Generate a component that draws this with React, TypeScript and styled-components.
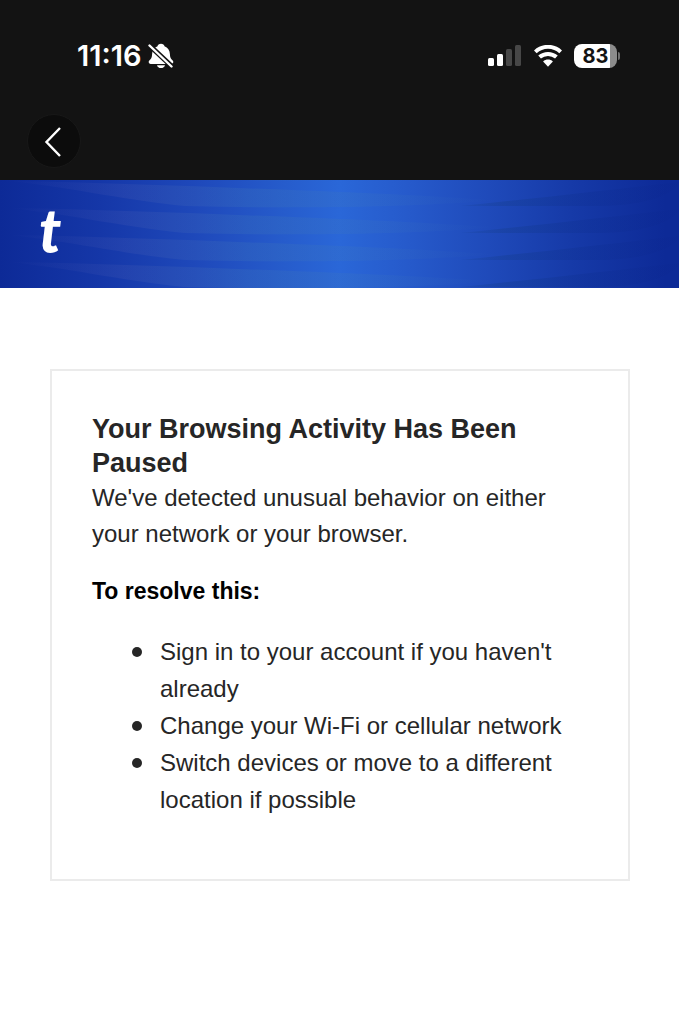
import React from 'react';
import styled, { createGlobalStyle } from 'styled-components';

const GlobalStyle = createGlobalStyle`
  *, *::before, *::after { box-sizing: border-box; }
  body {
    margin: 0;
    background: #ffffff;
    color: #262626;
    font-family: "Liberation Sans", Arial, Helvetica, sans-serif;
  }
`;

const TopArea = styled.div`
  background: #131313;
  padding-bottom: 12px;
`;

const StatusBar = styled.div`
  display: flex;
  align-items: center;
  justify-content: space-between;
  height: 112px;
  padding: 0 59px 0 77px;
`;

const StatusGroup = styled.div<{ $gap: number }>`
  display: flex;
  align-items: center;
  gap: ${({ $gap }) => $gap}px;
`;

const Clock = styled.time`
  color: #ffffff;
  font-family: Inter, sans-serif;
  font-size: 29px;
  font-weight: 600;
  line-height: 36px;
`;

const Battery = styled.div`
  display: flex;
  align-items: center;
  gap: 1px;
`;

const BatteryBody = styled.div`
  display: flex;
  align-items: center;
  justify-content: center;
  width: 43px;
  height: 24px;
  border-radius: 8px;
  background: linear-gradient(to right, #ffffff 83%, #8c8c8c 83%);
  color: #131313;
  font-family: Inter, sans-serif;
  font-size: 20px;
  font-weight: 700;
  line-height: 24px;
`;

const BatteryCap = styled.div`
  width: 2px;
  height: 8px;
  border-radius: 0 2px 2px 0;
  background: #707070;
`;

const NavBar = styled.nav`
  display: flex;
  padding: 2px 27px 0;
`;

const BackButton = styled.button`
  display: flex;
  align-items: center;
  justify-content: center;
  width: 54px;
  height: 54px;
  padding: 0;
  border: 1px solid #181818;
  border-radius: 50%;
  background: #0c0c0c;
  cursor: pointer;
`;

const Banner = styled.header`
  position: relative;
  display: flex;
  align-items: flex-start;
  height: 108px;
  padding: 10px 39px;
  overflow: hidden;
  background: linear-gradient(to right, #0d2a97 0%, #1537a8 15%, #1f4abc 30%, #265ccc 42%, #2a67d8 50%, #265acb 60%, #1f4aba 72%, #163aa8 84%, #0d2a97 98%);
`;

const BannerWaves = styled.svg`
  position: absolute;
  inset: 0;
  width: 100%;
  height: 100%;
`;

const LogoLink = styled.a`
  position: relative;
  color: #ffffff;
  font-family: Lato, sans-serif;
  font-size: 60px;
  font-style: italic;
  font-weight: 900;
  line-height: 80px;
  text-decoration: none;
`;

const Main = styled.main`
  padding: 81px 49px 80px 50px;
`;

const Card = styled.section`
  padding: 41px 40px 61px;
  border: 2px solid #ebebeb;
`;

const Title = styled.h1`
  margin: 0;
  font-size: 27px;
  font-weight: 700;
  line-height: 34px;
`;

const Text = styled.p`
  margin: 0;
  font-size: 24px;
  line-height: 36px;
`;

const Subtitle = styled.h2`
  margin: 21px 0 24px;
  color: #000000;
  font-size: 23px;
  font-weight: 700;
  line-height: 36px;
`;

const Steps = styled.ul`
  margin: 0;
  padding-left: 40px;
  list-style: none;
  font-size: 24px;
  line-height: 37px;
`;

const Step = styled.li`
  display: flex;
  gap: 18px;

  &::before {
    content: "";
    flex: none;
    width: 10px;
    height: 10px;
    margin-top: 14px;
    border-radius: 50%;
    background: #262626;
  }
`;

const BellOff = () => (
  <svg width="26" height="26" viewBox="0 0 26 26" aria-label="Silent mode" role="img">
    <path
      d="M13 .8c-1.900 0-3.300 1-3.500 2.500C6.200 4.400 4.200 7.500 4.100 11c-.1 3.600-.9 4.800-2.800 6.600-1.200 1.200-.7 3.300 1.300 3.300h20.800c2 0 2.500-2.100 1.300-3.300-1.900-1.800-2.700-3-2.800-6.600-.1-3.500-2.100-6.600-5.400-7.700C16.300 1.800 14.900.8 13 .8zM9 22.200c.4 1.800 2 2.900 4 2.900s3.600-1.100 4-2.900z"
      fill="#fff"
    />
    <path d="M0 1L25 24.500" stroke="#131313" strokeWidth="5" />
    <path d="M1.500 2.500L23.500 23.500" stroke="#fff" strokeWidth="2.400" strokeLinecap="round" />
  </svg>
);

const Signal = () => (
  <svg width="34" height="22" viewBox="0 0 34 22" aria-label="Signal" role="img">
    <rect x="0" y="13" width="6" height="8" rx="1.500" fill="#fff" />
    <rect x="9" y="9" width="6" height="12" rx="1.500" fill="#fff" />
    <rect x="18" y="4" width="6" height="17" rx="1.500" fill="#474747" />
    <rect x="27" y="0" width="6" height="21" rx="1.500" fill="#474747" />
  </svg>
);

const Wifi = () => (
  <svg width="28" height="22" viewBox="0 0 28 22" aria-label="Wi-Fi" role="img">
    <g fill="none" stroke="#fff" strokeWidth="4">
      <path d="M1.300 6.900C8.500.1 19.500.1 26.700 6.900" />
      <path d="M5.600 12.100c4.800-4.300 12-4.300 16.800 0" />
    </g>
    <path d="M14 21.800l-4.900-5.300c2.800-2.600 7-2.600 9.800 0z" fill="#fff" />
  </svg>
);

const waveRows = [-26, 1, 28, 55, 82];

const Waves = () => (
  <BannerWaves viewBox="0 0 679 108" preserveAspectRatio="none" aria-hidden="true">
    <defs>
      <linearGradient id="light" gradientUnits="userSpaceOnUse" x1="0" y1="0" x2="500" y2="0">
        <stop offset="0" stopColor="#5058b0" stopOpacity="0" />
        <stop offset="0.25" stopColor="#5060b4" stopOpacity="0.2" />
        <stop offset="0.5" stopColor="#4078b8" stopOpacity="0.24" />
        <stop offset="0.7" stopColor="#4078b8" stopOpacity="0.2" />
        <stop offset="1" stopColor="#3a70b8" stopOpacity="0" />
      </linearGradient>
      <linearGradient id="dark" gradientUnits="userSpaceOnUse" x1="460" y1="0" x2="679" y2="0">
        <stop offset="0" stopColor="#123a80" stopOpacity="0.1" />
        <stop offset="0.2" stopColor="#123a80" stopOpacity="0.28" />
        <stop offset="0.6" stopColor="#0a2a88" stopOpacity="0.2" />
        <stop offset="1" stopColor="#0a2288" stopOpacity="0.08" />
      </linearGradient>
    </defs>
    {waveRows.map((y) => (
      <g key={y} transform={`translate(0 ${y})`}>
        <path d="M10 0C120 2 240 7 340 11S450 17 500 19C420 26 300 28 185 25C130 20 80 8 10 0z" fill="url(#light)" />
        <path d="M460 25C530 18 610 9 679 1C679 10 650 25 600 25z" fill="url(#dark)" />
      </g>
    ))}
  </BannerWaves>
);

export default function App() {
  return (
    <>
      <GlobalStyle />
      <TopArea>
        <StatusBar>
          <StatusGroup $gap={6}>
            <Clock>11:16</Clock>
            <BellOff />
          </StatusGroup>
          <StatusGroup $gap={12}>
            <Signal />
            <Wifi />
            <Battery>
              <BatteryBody>83</BatteryBody>
              <BatteryCap />
            </Battery>
          </StatusGroup>
        </StatusBar>
        <NavBar>
          <BackButton type="button" aria-label="Back">
            <svg width="20" height="32" viewBox="0 0 20 32" aria-hidden="true">
              <path d="M16 3L2.500 17L16 31" fill="none" stroke="#fff" strokeWidth="2.400" />
            </svg>
          </BackButton>
        </NavBar>
      </TopArea>
      <Banner>
        <Waves />
        <LogoLink href="#">t</LogoLink>
      </Banner>
      <Main>
        <Card>
          <Title>Your Browsing Activity Has Been Paused</Title>
          <Text>We've detected unusual behavior on either your network or your browser.</Text>
          <Subtitle>To resolve this:</Subtitle>
          <Steps>
            <Step>Sign in to your account if you haven't already</Step>
            <Step>Change your Wi-Fi or cellular network</Step>
            <Step>Switch devices or move to a different location if possible</Step>
          </Steps>
        </Card>
      </Main>
    </>
  );
}
